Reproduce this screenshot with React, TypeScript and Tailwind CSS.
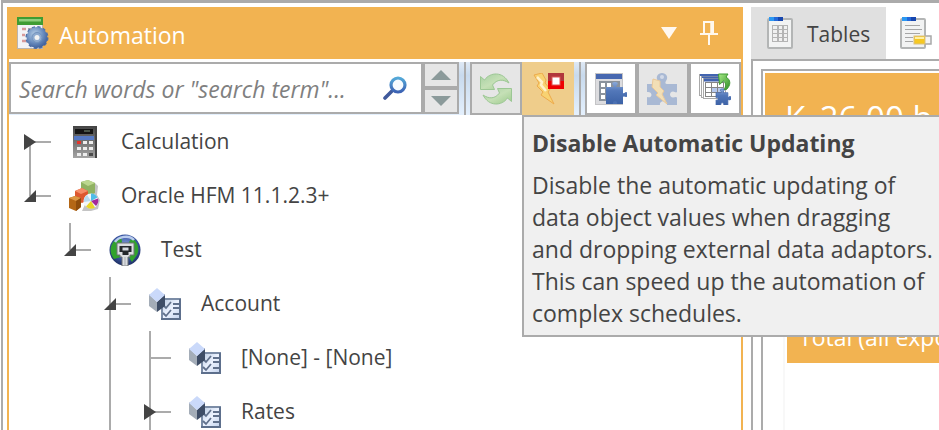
import React from "react";

const iconClass = "block h-8 w-8 shrink-0";

const AutomationIcon = () => (
  <svg className={iconClass} viewBox="0 0 32 32">
    <defs>
      <radialGradient id="gearFill" cx="40%" cy="35%" r="70%">
        <stop offset="0" stopColor="#b9d0e6" />
        <stop offset="0.55" stopColor="#6c8fc0" />
        <stop offset="1" stopColor="#3a5a96" />
      </radialGradient>
    </defs>
    <rect x="0.5" y="1" width="25" height="30.5" fill="#f3f3f6" stroke="#b9b4b0" />
    <rect x="0" y="0" width="26" height="8" fill="#3f9c33" />
    <rect x="2" y="2" width="22" height="2.5" fill="#8fce7c" />
    <path d="M5 12h4M5 18h3M5 24h4" stroke="#d89a9a" strokeWidth="2.5" />
    <path d="M11 12h4M10 18h2" stroke="#8a8a92" strokeWidth="1.5" />
    <circle cx="20" cy="20.5" r="10.5" fill="none" stroke="#5070a6" strokeWidth="2" strokeDasharray="3.2 2.3" />
    <circle cx="20" cy="20.5" r="10.5" fill="url(#gearFill)" />
    <circle cx="20" cy="20.5" r="5" fill="#8fabcf" stroke="#7292bd" />
    <circle cx="20" cy="20.5" r="2.5" fill="#f3f3f3" />
  </svg>
);

const PinIcon = () => (
  <svg className="block h-6 w-5" viewBox="0 0 20 24" fill="none" stroke="#fff8ee">
    <path d="M5 13V1h9v12" strokeWidth="2" />
    <path d="M13 1v12" strokeWidth="3.5" />
    <path d="M1 13h18M10 14v10" strokeWidth="2" />
  </svg>
);

const SearchIcon = () => (
  <svg className="block h-6 w-6" viewBox="0 0 24 24" fill="none">
    <defs>
      <linearGradient id="lens" x1="0" y1="0" x2="0" y2="1">
        <stop offset="0" stopColor="#54a9d8" />
        <stop offset="1" stopColor="#3c62b4" />
      </linearGradient>
    </defs>
    <path d="M9.5 14.5 2 22" stroke="#405a9c" strokeWidth="3.6" strokeLinecap="round" />
    <circle cx="15" cy="9" r="7" stroke="url(#lens)" strokeWidth="3.2" fill="#f6fbff" />
  </svg>
);

const RefreshIcon = () => (
  <svg className={iconClass} viewBox="0 0 32 32">
    <defs>
      <linearGradient id="leaf" x1="0" y1="0" x2="1" y2="1">
        <stop offset="0" stopColor="#a6cfa2" />
        <stop offset="0.5" stopColor="#c5e0b6" />
        <stop offset="1" stopColor="#9cca8c" />
      </linearGradient>
    </defs>
    <g fill="url(#leaf)" stroke="#9cc794" strokeWidth="1">
      <path d="M0.5 3.5 4.5 7C10 -1 23 -2 29 10C23 6 17 6 12.500 12L14.5 16.5H0.5Z" />
      <path d="M31.5 28.5 27.5 25C22 33 9 34 3 22C9 26 15 26 19.500 20L17.5 15.5H31.5Z" />
    </g>
  </svg>
);

const StopUpdateIcon = () => (
  <svg className={iconClass} viewBox="0 0 32 32">
    <path d="M2 2 10 0 14 7 13 10 18 16 16 19 22 31 9 22 11 19 5 13 7 10Z" fill="#f8d272" stroke="#edaa4c" strokeWidth="1" />
    <path d="M5 4 10 9 9 12 14 18" fill="none" stroke="#fff1cc" strokeWidth="2.5" />
    <rect x="16" y="0" width="16" height="16" fill="#b1363b" />
    <path d="M16 16V8h16v8Z" fill="#ee0000" />
    <rect x="20" y="4" width="8" height="8" fill="#fff" stroke="#df5555" />
  </svg>
);

const puzzlePath =
  "M0 5h7C8 5 8 4 7 3C5 1 7 0 9 0S13 1 11 3C10 4 10 5 11 5h6v6c1 1 2-1 3-1C22 10 22 15 20 15C19 15 18 14 17 15V22H11C12 18 6 18 7 22H0V15C4 17 4 10 0 12Z";

const TablePuzzleIcon = () => (
  <svg className={iconClass} viewBox="0 0 32 32">
    <defs>
      <linearGradient id="puzzle" x1="0" y1="0" x2="0" y2="1">
        <stop offset="0" stopColor="#8aa9da" />
        <stop offset="0.4" stopColor="#5277b9" />
        <stop offset="1" stopColor="#3c62a6" />
      </linearGradient>
    </defs>
    <rect x="0.5" y="0.5" width="27" height="31" fill="#dcdcdf" stroke="#c4c4c6" />
    <rect x="1" y="1" width="26" height="5" fill="#4768b0" />
    <rect x="4" y="8" width="21" height="20" fill="#8a929c" />
    <path d="M6 10h4v4H6zM12 10h4v4h-4zM6 16h4v4H6zM12 16h4v4h-4zM6 22h4v4H6z" fill="#fff" />
    <path d="M11 14h16v17H11Z" fill="#4b70b2" />
    <path transform="translate(11 9)" d={puzzlePath} fill="url(#puzzle)" />
  </svg>
);

const PuzzleBoltIcon = () => (
  <svg className={iconClass} viewBox="0 0 32 32">
    <path
      d="M0 11h10c2 0 2-2 1-3C8 4 11 0 15 0s7 4 4 8c-1 1-1 3 1 3h10v8c-1 1-2 0-4-.5-4 0-4 6 0 6 2-.5 3-1 4 0V32H20c1-5-8-5-7 0H0v-8c6 2 6-6 0-5Z"
      fill="#a9b9d4"
    />
    <circle cx="15" cy="4" r="2" fill="#d2dae8" />
    <path d="M6 6 13 8 13 14 17 18 15 21 20 31 9 22 11 20 5 14Z" fill="#f2dfb6" stroke="#eac99a" />
  </svg>
);

const TableStackIcon = () => (
  <svg className={iconClass} viewBox="0 0 32 32">
    <defs>
      <linearGradient id="greenArrow" x1="0" y1="0" x2="1" y2="1">
        <stop offset="0" stopColor="#a6ea84" />
        <stop offset="1" stopColor="#2f8f29" />
      </linearGradient>
    </defs>
    <g fill="#fff" stroke="#a9a9a9">
      <rect x="0.5" y="1.5" width="20" height="21" />
      <rect x="2.5" y="3.5" width="20" height="21" />
      <rect x="4.5" y="5.5" width="22" height="20" />
    </g>
    <path d="M1 1h20v2H1zM3 3.5h20v1.5H3zM5 5.5h20v3H5z" fill="#4264b0" />
    <rect x="6.5" y="9.5" width="18" height="14" fill="#fff" stroke="#858585" />
    <path d="M12.5 14.5h6v5h-6zM18.5 14.5h6v9h-6z" fill="#b7c9ee" />
    <path d="M12.5 9.5v14M18.5 9.5v14M6.5 14.5h18M6.5 19.5h18" stroke="#858585" fill="none" />
    <path d="M19.5 1H29L27 4C32 7 32 12 27.5 16.5H25C27.5 13 27 10 24.5 8L20.5 11.5Z" fill="url(#greenArrow)" stroke="#3f9a35" />
    <path transform="translate(17 16) scale(0.7 0.73)" d={puzzlePath} fill="url(#puzzle)" stroke="#4468ad" />
  </svg>
);

const Page = ({ children }: { children?: React.ReactNode }) => (
  <>
    <rect x="1" y="2" width="24" height="29" rx="1" fill="#f2f3f3" stroke="#b3b5b5" strokeWidth="2" />
    <rect x="2" y="0" width="6" height="4" fill="#2b98f2" />
    <rect x="7" y="0" width="5" height="4" fill="#2468d8" />
    <rect x="11" y="0" width="5" height="4" fill="#1746ae" />
    {children}
  </>
);

const TablesIcon = () => (
  <svg className={iconClass} viewBox="-3 0 32 32">
    <Page>
      <rect x="5" y="8" width="16" height="17" fill="#b4b4b4" />
      <path d="M6 9h4v3H6zM12 9h3v3h-3zM17 9h3v3h-3zM6 13h4v3H6zM12 13h3v3h-3zM17 13h3v3h-3zM6 17h4v3H6zM12 17h3v3h-3zM17 17h3v3h-3zM6 21h4v3H6zM12 21h3v3h-3zM17 21h3v3h-3z" fill="#f0f0f0" />
    </Page>
  </svg>
);

const NotesIcon = () => (
  <svg className={iconClass} viewBox="0 0 32 32">
    <Page>
      <path d="M5 8.5h15M5 12.5h17M5 16.5h15M5 20.5h8M5 24.5h8" stroke="#a6a6a6" />
    </Page>
    <path d="M25 19h6v8h-6" fill="#f4f4f4" stroke="#a8a8a8" strokeWidth="1.5" />
    <rect x="14" y="19" width="11" height="8" fill="#f6c821" stroke="#d9c080" />
    <path d="M15 21h9" stroke="#fff0a4" strokeWidth="2" />
  </svg>
);

const CalculatorIcon = () => (
  <svg className={iconClass} viewBox="0 0 32 32">
    <defs>
      <linearGradient id="calc" x1="0" y1="0" x2="0" y2="1">
        <stop offset="0" stopColor="#444" />
        <stop offset="1" stopColor="#a4a4a4" />
      </linearGradient>
    </defs>
    <rect x="4" y="0" width="24" height="32" fill="url(#calc)" />
    <path d="M27 0v32" stroke="#444" strokeWidth="2" />
    <rect x="6" y="3" width="18" height="5" fill="#151515" />
    <path d="M15 5h6" stroke="#5b6a5b" strokeWidth="1.5" />
    <rect x="5" y="10" width="20" height="4" fill="#5579c4" />
    <path d="M14 15h4v3h-4zM20 15h4v3h-4zM8 21h4v3H8zM14 21h4v3h-4zM20 21h4v3h-4zM8 27h4v3H8zM14 27h4v3h-4z" fill="#ededed" />
    <path d="M8 15h4v3H8z" fill="#e5352b" />
    <path d="M20 27h4v3h-4z" fill="#4c4c4c" />
  </svg>
);

const CubesIcon = () => (
  <svg className={iconClass} viewBox="0 0 32 32">
    <path d="M13 31 26 3 29 6 28 15 31 20 29 29 22 31Z" fill="#c4c4c4" />
    <path d="M12 2 19 0 26 3V13L19 16 12 12Z" fill="#90b262" />
    <path d="M12 2 19 0 26 3 19 6Z" fill="#bcd78f" />
    <path d="M6 11 13 8 19 11V20L13 23 6 20Z" fill="#dd5830" />
    <path d="M6 11 13 8 19 11 12 14Z" fill="#f58e69" />
    <path d="M0 18 6 16 12 18V27L7 31 0 28Z" fill="#b46716" />
    <path d="M0 18 6 16 12 18 7 21Z" fill="#dd9845" />
    <path d="M7 21 12 18V27L7 31Z" fill="#8f4d0c" />
    <circle cx="22" cy="21" r="7.5" fill="#f3f6fa" />
    <path d="M22 21V13.5a7.5 7.5 0 0 1 6.5 4Z" fill="#4fbce8" />
    <path d="M22 21 29 18.5a7.5 7.5 0 0 1-2 7.5Z" fill="#a42a9a" />
    <path d="M22 21 26 27.5a7.5 7.5 0 0 1-9-1Z" fill="#e8d628" />
    <path d="M22 21 15 22a7.5 7.5 0 0 1 3-7Z" fill="#b8daf0" />
  </svg>
);

const NetworkIcon = () => (
  <svg className={iconClass} viewBox="0 0 32 32">
    <defs>
      <radialGradient id="globe" cx="50%" cy="40%" r="60%">
        <stop offset="0" stopColor="#8fa8e2" />
        <stop offset="0.6" stopColor="#3e5ba8" />
        <stop offset="1" stopColor="#1e2f63" />
      </radialGradient>
    </defs>
    <circle cx="16" cy="16" r="15.5" fill="url(#globe)" />
    <path d="M5 7C0 13 1 20 5 25L12 23 8 17 13 8 12 3ZM23 4C29 8 31 15 28 21L23 28 19 22 25 18 20 8Z" fill="#32a32c" />
    <path d="M6 8C9 3 20 0 25 6" fill="none" stroke="#b9cbee" strokeWidth="2.5" />
    <path d="M8 9h17v12h-4v2h-2v9h-6v-9h-2v-2H8Z" fill="#dcdee2" stroke="#6d7175" />
    <path d="M10.5 12h12v6h-3v3h-6v-3h-3Z" fill="#24272c" />
    <path d="M13.5 15h6" stroke="#d3d7dd" strokeWidth="3" />
    <path d="M16 23v9" stroke="#a9adb0" />
  </svg>
);

const DimensionIcon = () => (
  <svg className={iconClass} viewBox="0 0 32 32">
    <defs>
      <linearGradient id="sheet" x1="0" y1="0" x2="1" y2="1">
        <stop offset="0" stopColor="#b8c9e0" />
        <stop offset="0.5" stopColor="#edf3ff" />
        <stop offset="1" stopColor="#c3d2ec" />
      </linearGradient>
    </defs>
    <rect x="13" y="11" width="18" height="20" fill="url(#sheet)" stroke="#7b8ca6" strokeWidth="2" />
    <path d="M12 31h20M31 11v21" stroke="#5d6f8c" strokeWidth="2" />
    <path d="M24 16h6M24 20h6M24 26h6" stroke="#61718c" strokeWidth="2" />
    <path d="m14 17 3 3 5-6M14 25l3 3 5-6" fill="none" stroke="#61718c" strokeWidth="1.8" />
    <path d="M0 6 8 14V24L0 18Z" fill="#a4adb8" />
    <path d="M8 14 16 6V18L8 24Z" fill="#3e4d66" />
    <path d="M8 0 16 7 8 14 0 7Z" fill="#cad9fa" />
  </svg>
);

interface GuideProps {
  line: "none" | "top" | "bottom" | "full";
  node?: "leaf" | "open" | "closed";
}

const guidePaths = {
  none: "",
  top: "M20 0V27",
  bottom: "M20 27V54",
  full: "M20 0V54",
};

const Guide = ({ line, node }: GuideProps) => (
  <svg className="block h-full w-10 shrink-0 overflow-visible" viewBox="0 0 40 54">
    <path d={guidePaths[line]} stroke="#ababab" strokeWidth="2" />
    {node && <path d="M20 27H41" stroke="#ababab" strokeWidth="2" />}
    {node === "closed" && <path d="M14 19 26 27 14 35Z" fill="#444" />}
    {node === "open" && <path d="M26 21V33H14Z" fill="#444" />}
  </svg>
);

interface TreeItem {
  label: string;
  icon: React.ReactNode;
  guides: GuideProps[];
}

const items: TreeItem[] = [
  { label: "Calculation", icon: <CalculatorIcon />, guides: [{ line: "bottom", node: "closed" }] },
  { label: "Oracle HFM 11.1.2.3+", icon: <CubesIcon />, guides: [{ line: "top", node: "open" }] },
  { label: "Test", icon: <NetworkIcon />, guides: [{ line: "none" }, { line: "top", node: "open" }] },
  {
    label: "Account",
    icon: <DimensionIcon />,
    guides: [{ line: "none" }, { line: "none" }, { line: "full", node: "open" }],
  },
  {
    label: "[None] - [None]",
    icon: <DimensionIcon />,
    guides: [{ line: "none" }, { line: "none" }, { line: "full" }, { line: "full", node: "leaf" }],
  },
  {
    label: "Rates",
    icon: <DimensionIcon />,
    guides: [{ line: "none" }, { line: "none" }, { line: "full" }, { line: "full", node: "closed" }],
  },
];

const toolButton = "flex h-[53px] w-[52px] items-center justify-center border-2 border-[#ababab]";

const Separator = () => <div className="mx-1 w-0.5 shrink-0 bg-[#ababab]" />;

const Toolbar = () => (
  <div className="flex h-[53px] bg-linear-to-b from-[#dfe9f5] via-[#c8daed] via-25% to-[#e4f0fd]">
    <div className="flex h-[52px] min-w-0 flex-1 items-center border-2 border-[#ababab] bg-white">
      <input
        type="text"
        aria-label="Search"
        placeholder={'Search words or "search term"...'}
        className="h-full min-w-0 flex-1 pt-0.5 pl-2 text-[23px] italic outline-none placeholder:text-[#808080]"
      />
      <button aria-label="Find" className="mr-3.5">
        <SearchIcon />
      </button>
    </div>
    <div className="flex h-[52px] w-9 shrink-0 flex-col">
      <button aria-label="Previous match" className="flex flex-1 items-center justify-center border-2 border-[#ababab] bg-[#e6e6e6]">
        <svg className="block h-2.5 w-5" viewBox="0 0 20 10">
          <path d="M0 10 10 0 20 10Z" fill="#8b9a9a" />
        </svg>
      </button>
      <button aria-label="Next match" className="flex flex-1 items-center justify-center border-2 border-[#ababab] bg-[#e6e6e6]">
        <svg className="block h-2.5 w-5" viewBox="0 0 20 10">
          <path d="M0 0 10 10 20 0Z" fill="#8b9a9a" />
        </svg>
      </button>
    </div>
    <div className="ml-px flex shrink-0">
      <Separator />
      <button aria-label="Refresh" className={`${toolButton} bg-[#e6e6e6]`}>
        <RefreshIcon />
      </button>
      <div className="relative">
        <button
          aria-label="Disable Automatic Updating"
          aria-describedby="update-tip"
          className="flex h-[53px] w-[52px] items-center justify-center bg-[#efcd8b]"
        >
          <StopUpdateIcon />
        </button>
        <div
          id="update-tip"
          role="tooltip"
          className="absolute top-full left-0 z-10 w-[430px] border-2 border-[#ababab] bg-[#f0f0f0] px-2 pt-2.5 pb-1.5 whitespace-nowrap text-[#444]"
        >
          <p className="mb-2.5 text-[23px] leading-8 font-bold">Disable Automatic Updating</p>
          <p className="text-[23px] leading-8">
            Disable the automatic updating of
            <br />
            data object values when dragging
            <br />
            and dropping external data adaptors.
            <br />
            This can speed up the automation of
            <br />
            complex schedules.
          </p>
        </div>
      </div>
      <div className="ml-px flex">
        <Separator />
      </div>
      <button aria-label="Insert table" className={`${toolButton} bg-white`}>
        <TablePuzzleIcon />
      </button>
      <button aria-label="Run adaptor" className={`${toolButton} bg-[#e6e6e6]`}>
        <PuzzleBoltIcon />
      </button>
      <button aria-label="Update all tables" className={`${toolButton} bg-white`}>
        <TableStackIcon />
      </button>
    </div>
  </div>
);

const AutomationPanel = () => (
  <section className="flex flex-col border-x-2 border-[#f2b351]">
    <header className="-mx-0.5 mb-[3px] flex h-[52px] shrink-0 items-center bg-[#f2b351] pr-6 pl-2.5 text-white">
      <AutomationIcon />
      <h1 className="ml-2.5 flex-1 pt-1 text-[23px]">Automation</h1>
      <button aria-label="Panel menu" className="mr-[22px]">
        <svg className="block h-3 w-4" viewBox="0 0 16 12">
          <path d="M0 0H16L8 12Z" fill="#fff8f0" />
        </svg>
      </button>
      <button aria-label="Pin panel">
        <PinIcon />
      </button>
    </header>
    <Toolbar />
    <ul className="pl-px text-[21px] text-[#444]">
      {items.map((item) => (
        <li key={item.label} className="flex h-[54px] items-center">
          {item.guides.map((guide, index) => (
            <Guide key={index} {...guide} />
          ))}
          <span className="mr-5 ml-[19px]">{item.icon}</span>
          <span className="whitespace-nowrap">{item.label}</span>
        </li>
      ))}
    </ul>
  </section>
);

const Workspace = () => (
  <main className="flex flex-col overflow-hidden">
    <nav className="flex h-[52px] shrink-0">
      <button className="flex shrink-0 items-center gap-[11px] bg-[#e0e0e0] pr-4 pl-[13px] text-[21px] text-[#444]">
        <TablesIcon />
        <span className="pt-1">Tables</span>
      </button>
      <button aria-label="Notes" className="flex shrink-0 items-center px-3.5">
        <NotesIcon />
      </button>
    </nav>
    <div className="flex-1 border-t-2 border-l-2 border-[#ababab] pt-2 pl-2">
      <div className="h-full border-t-2 border-l-2 border-[#ababab] pt-0.5 pl-0.5 whitespace-nowrap text-white">
        <h2 className="h-[220px] bg-[#f2b351] px-5 pt-5 text-[33px]">K_26.00 b</h2>
        <div className="ml-[18px] h-full border-l-2 border-[#f8f8f8] pl-0.5">
          <div className="flex h-[70px] items-end bg-[#f2b351] px-3 pb-2.5 text-[23px] leading-8">Total (all exposures)</div>
        </div>
      </div>
    </div>
  </main>
);

export default function App() {
  return (
    <div className="h-screen overflow-hidden bg-white pl-px font-['Open_Sans','Noto_Sans',sans-serif]">
      <div className="grid h-full grid-cols-[minmax(0,736fr)_minmax(0,188fr)] gap-2 border-t-[3px] border-l-2 border-[#ababab] pt-1 pl-1">
        <AutomationPanel />
        <Workspace />
      </div>
    </div>
  );
}
